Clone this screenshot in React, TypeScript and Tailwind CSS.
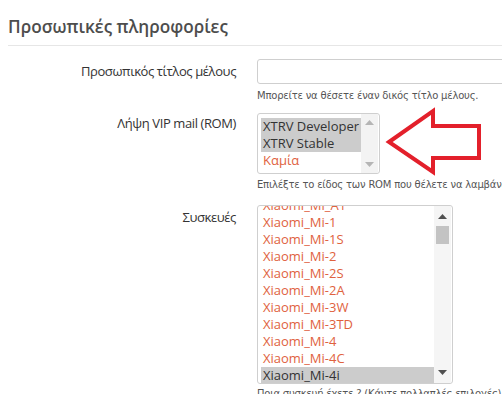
import React from "react";

const ORANGE = "#e0623e";

function UpArrow({ color }: { color: string }) {
  return (
    <svg width="9" height="5" viewBox="0 0 9 5">
      <polygon points="0,5 4.5,0 9,5" fill={color} />
    </svg>
  );
}
function DownArrow({ color }: { color: string }) {
  return (
    <svg width="9" height="5" viewBox="0 0 9 5">
      <polygon points="0,0 4.5,5 9,0" fill={color} />
    </svg>
  );
}

export default function App() {
  const devices = [
    "Xiaomi_Mi_A1",
    "Xiaomi_Mi-1",
    "Xiaomi_Mi-1S",
    "Xiaomi_Mi-2",
    "Xiaomi_Mi-2S",
    "Xiaomi_Mi-2A",
    "Xiaomi_Mi-3W",
    "Xiaomi_Mi-3TD",
    "Xiaomi_Mi-4",
    "Xiaomi_Mi-4C",
    "Xiaomi_Mi-4i",
  ];
  const body = { fontFamily: '"Open Sans", "DejaVu Sans", sans-serif' };
  const small = { fontFamily: '"DejaVu Sans", "Open Sans", sans-serif' };
  return (
    <div className="relative w-[502px] h-[394px] overflow-hidden bg-white" style={body}>
      <div className="pl-2 pt-[14px]">
        <h2 className="text-[17.2px] leading-[26px] font-semibold text-[#4d4d4d] border-b border-[#e6e6e6] pb-[5px]">
          Προσωπικές πληροφορίες
        </h2>
      </div>

      <div className="flex pt-[13px]">
        <div className="w-[257px] shrink-0 pr-[21px] text-right text-[13px] tracking-[-0.4px] leading-[18px] text-[#333] pt-[3px]">
          Προσωπικός τίτλος μέλους
        </div>
        <div className="flex-1 min-w-0">
          <div className="h-[25px] w-[280px] border border-[#cfcfcf] rounded-[3px] bg-white" />
          <div className="text-[10px] tracking-[-0.2px] leading-[14px] text-[#555] pt-[5px] whitespace-nowrap" style={small}>
            Μπορείτε να θέσετε έναν δικός τίτλο μέλους.
          </div>
        </div>
      </div>

      <div className="flex pt-[10px]">
        <div className="w-[257px] shrink-0 pr-[21px] text-right text-[13px] tracking-[-0.4px] leading-[18px] text-[#333] pt-[1px]">
          Λήψη VIP mail (ROM)
        </div>
        <div className="flex-1 min-w-0">
          <div className="flex h-[61px] w-[123px] border border-[#cfcfcf] rounded-[3px] bg-white overflow-hidden">
            <div className="flex-1 pl-[3px] pt-[4px] text-[13px] leading-[17px]">
              <div className="bg-[#cccccc] text-[#333] pl-[2px] whitespace-nowrap">XTRV Developer</div>
              <div className="bg-[#cccccc] text-[#333] pl-[2px] whitespace-nowrap">XTRV Stable</div>
              <div className="pl-[2px] whitespace-nowrap" style={{ color: ORANGE }}>Καμία</div>
            </div>
            <div className="w-[17px] bg-[#f3f3f3] flex flex-col items-center justify-between py-[6px] mr-[1px]">
              <UpArrow color="#b5b5b5" />
              <DownArrow color="#b5b5b5" />
            </div>
          </div>
          <div className="text-[10px] tracking-[-0.2px] leading-[14px] text-[#555] pt-[4px] whitespace-nowrap" style={small}>
            Επιλέξτε το είδος των ROM που θέλετε να λαμβάνετε
          </div>
        </div>
      </div>

      <div className="flex pt-[13px]">
        <div className="w-[257px] shrink-0 pr-[21px] text-right text-[13px] tracking-[-0.4px] leading-[18px] text-[#333] pt-[3px]">
          Συσκευές
        </div>
        <div className="flex-1 min-w-0">
          <div className="flex h-[179px] w-[196px] border border-[#cfcfcf] rounded-[3px] bg-white overflow-hidden">
            <div className="flex-1 pl-[3px] overflow-hidden">
              <div className="mt-[-9px] text-[13px] leading-[17px]">
                {devices.map((d, i) =>
                  i === devices.length - 1 ? (
                    <div key={d} className="bg-[#cccccc] text-[#333] pl-[2px] whitespace-nowrap">
                      {d}
                    </div>
                  ) : (
                    <div key={d} className="pl-[2px] whitespace-nowrap" style={{ color: ORANGE }}>
                      {d}
                    </div>
                  )
                )}
              </div>
            </div>
            <div className="w-[17px] bg-[#f5f5f5] flex flex-col items-center py-[8px] mr-[1px]">
              <UpArrow color="#505050" />
              <div className="mt-[7px] w-[13px] h-[18px] bg-[#c3c3c3]" />
              <div className="flex-1" />
              <DownArrow color="#505050" />
            </div>
          </div>
          <div className="text-[10px] tracking-[-0.2px] leading-[14px] text-[#555] pt-[3px] whitespace-nowrap" style={small}>
            Ποια συσκευή έχετε ? (Κάντε πολλαπλές επιλογές)
          </div>
        </div>
      </div>

      <svg className="absolute left-0 top-0" width="502" height="394" viewBox="0 0 502 394">
        <polygon
          points="389,142 433,111 433,126 479,126 479,158 433,158 433,172"
          fill="none"
          stroke="#e3202b"
          strokeWidth="4"
          strokeLinejoin="miter"
        />
      </svg>
    </div>
  );
}
